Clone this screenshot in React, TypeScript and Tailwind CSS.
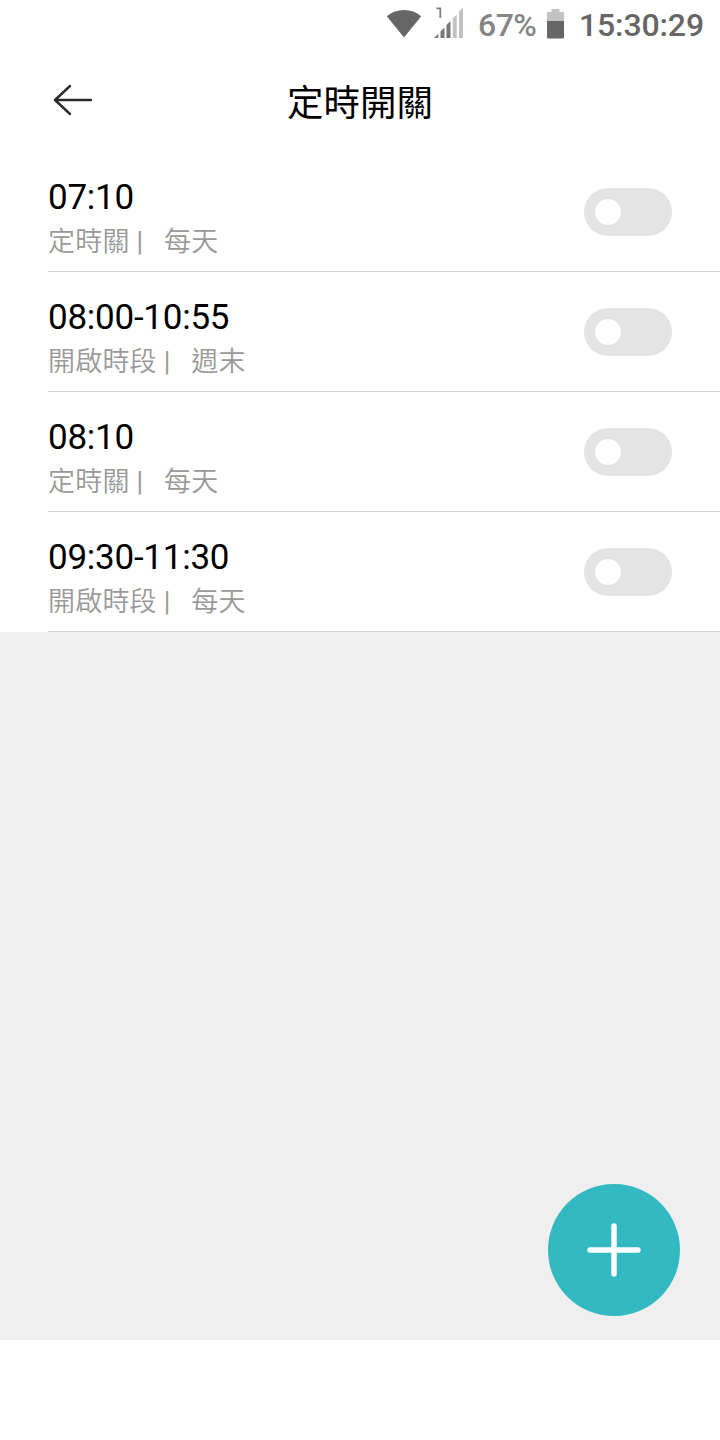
import { useState } from "react";

interface TimerType {
  id: number;
  time: string;
  kind: string;
  repeat: string;
  enabled: boolean;
}

const initialTimers: TimerType[] = [
  { id: 1, time: "07:10", kind: "定時關", repeat: "每天", enabled: false },
  { id: 2, time: "08:00-10:55", kind: "開啟時段", repeat: "週末", enabled: false },
  { id: 3, time: "08:10", kind: "定時關", repeat: "每天", enabled: false },
  { id: 4, time: "09:30-11:30", kind: "開啟時段", repeat: "每天", enabled: false },
];

const StatusBar = () => (
  <div className="h-12 pr-4 flex items-center justify-end font-medium text-[32px] leading-[46px] text-[#666666]">
    {/* Wifi */}
    <svg width="36" height="30" viewBox="0 0 36 30" className="mr-[12px]">
      <path d="M.8 7.2C5.800 3.200 11.500 1 18 1s12.200 2.200 17.200 6.200L18 28.500z" fill="#666666" />
    </svg>

    {/* Mobile signal */}
    <svg width="30" height="34" viewBox="0 0 30 34" className="mr-[14px]">
      <path d="M2.500 1.300h3.800V11" fill="none" stroke="#808080" strokeWidth="1.800" />
      <path d="M0 31l4.300-4.300V31zM6.500 31v-6.500l4-4V31zM12.500 31V18l4-4v17z" fill="#757575" />
      <path d="M18.700 31V11.500l4-4V31zM25 31V4.500l4-4V31z" fill="#c2c2c2" />
    </svg>

    <span className="pt-[2px] w-[61px] tracking-[-0.5px] text-[#858585]">67%</span>

    {/* Battery */}
    <svg width="17" height="30" viewBox="0 0 17 30" className="ml-[8px] mr-[15px]">
      <path d="M4.500 0h8v3H17v10H0V3h4.500z" fill="#c2c2c2" />
      <path d="M0 12h17v16.500a1 1 0 0 1-1 1H1a1 1 0 0 1-1-1z" fill="#666666" />
    </svg>

    <span className="pt-[2px] tracking-[-0.12px]">15:30:29</span>
  </div>
);

const Header = () => (
  <header className="h-[104px] px-12 grid grid-cols-[1fr_auto_1fr] items-center">
    <button aria-label="返回" className="justify-self-start ml-[5px]">
      <svg width="40" height="34" viewBox="0 0 40 34" className="block">
        <path
          d="M17 3L2 17l15 14M2 17h36"
          fill="none"
          stroke="#2b2b2b"
          strokeWidth="2.400"
          strokeLinecap="round"
          strokeLinejoin="round"
        />
      </svg>
    </button>
    <h1 className="pt-[7px] text-[36.500px] leading-[48px] text-black">定時開關</h1>
  </header>
);

interface TimerRowProps {
  timer: TimerType;
  onToggle: (id: number) => void;
}

const TimerRow = ({ timer, onToggle }: TimerRowProps) => (
  <li className="h-[120px] ml-12 pr-12 flex items-center justify-between border-b border-[#d4d4d4]">
    <div className="pt-[16px]">
      <p className="text-[35px] leading-[44px] tracking-[-0.25px] text-black">{timer.time}</p>
      <p className="text-[27px] leading-[44px] tracking-[0.2px] font-[350] text-[#999999] whitespace-pre">
        {timer.kind}
        <span className="font-normal">{" |   "}</span>
        {timer.repeat}
      </p>
    </div>
    <button
      role="switch"
      aria-checked={timer.enabled}
      aria-label={timer.time}
      onClick={() => onToggle(timer.id)}
      className={`w-[88px] h-12 px-[11px] rounded-full flex items-center ${
        timer.enabled ? "bg-[#33b9c1] justify-end" : "bg-[#e4e4e4] justify-start"
      }`}
    >
      <span className="size-[26px] rounded-full bg-white" />
    </button>
  </li>
);

const App = () => {
  const [timers, setTimers] = useState(initialTimers);

  const handleToggle = (id: number) => {
    setTimers((prev) => prev.map((t) => (t.id === id ? { ...t, enabled: !t.enabled } : t)));
  };

  return (
    <div className="w-[720px] h-[1440px] flex flex-col bg-white font-[Roboto,'Noto_Sans_CJK_TC',sans-serif]">
      <StatusBar />
      <Header />
      <main className="h-[1188px] flex flex-col bg-[#efefef]">
        <ul className="bg-white">
          {timers.map((timer) => (
            <TimerRow key={timer.id} timer={timer} onToggle={handleToggle} />
          ))}
        </ul>

        {/* Add timer */}
        <button
          aria-label="新增"
          className="mt-auto mb-6 mr-10 self-end size-[132px] rounded-full bg-[#33b9c1] flex items-center justify-center"
        >
          <svg width="54" height="54" viewBox="0 0 54 54">
            <path d="M27 3v48M3 27h48" stroke="#ffffff" strokeWidth="5.400" strokeLinecap="round" />
          </svg>
        </button>
      </main>
    </div>
  );
};

export default App;
